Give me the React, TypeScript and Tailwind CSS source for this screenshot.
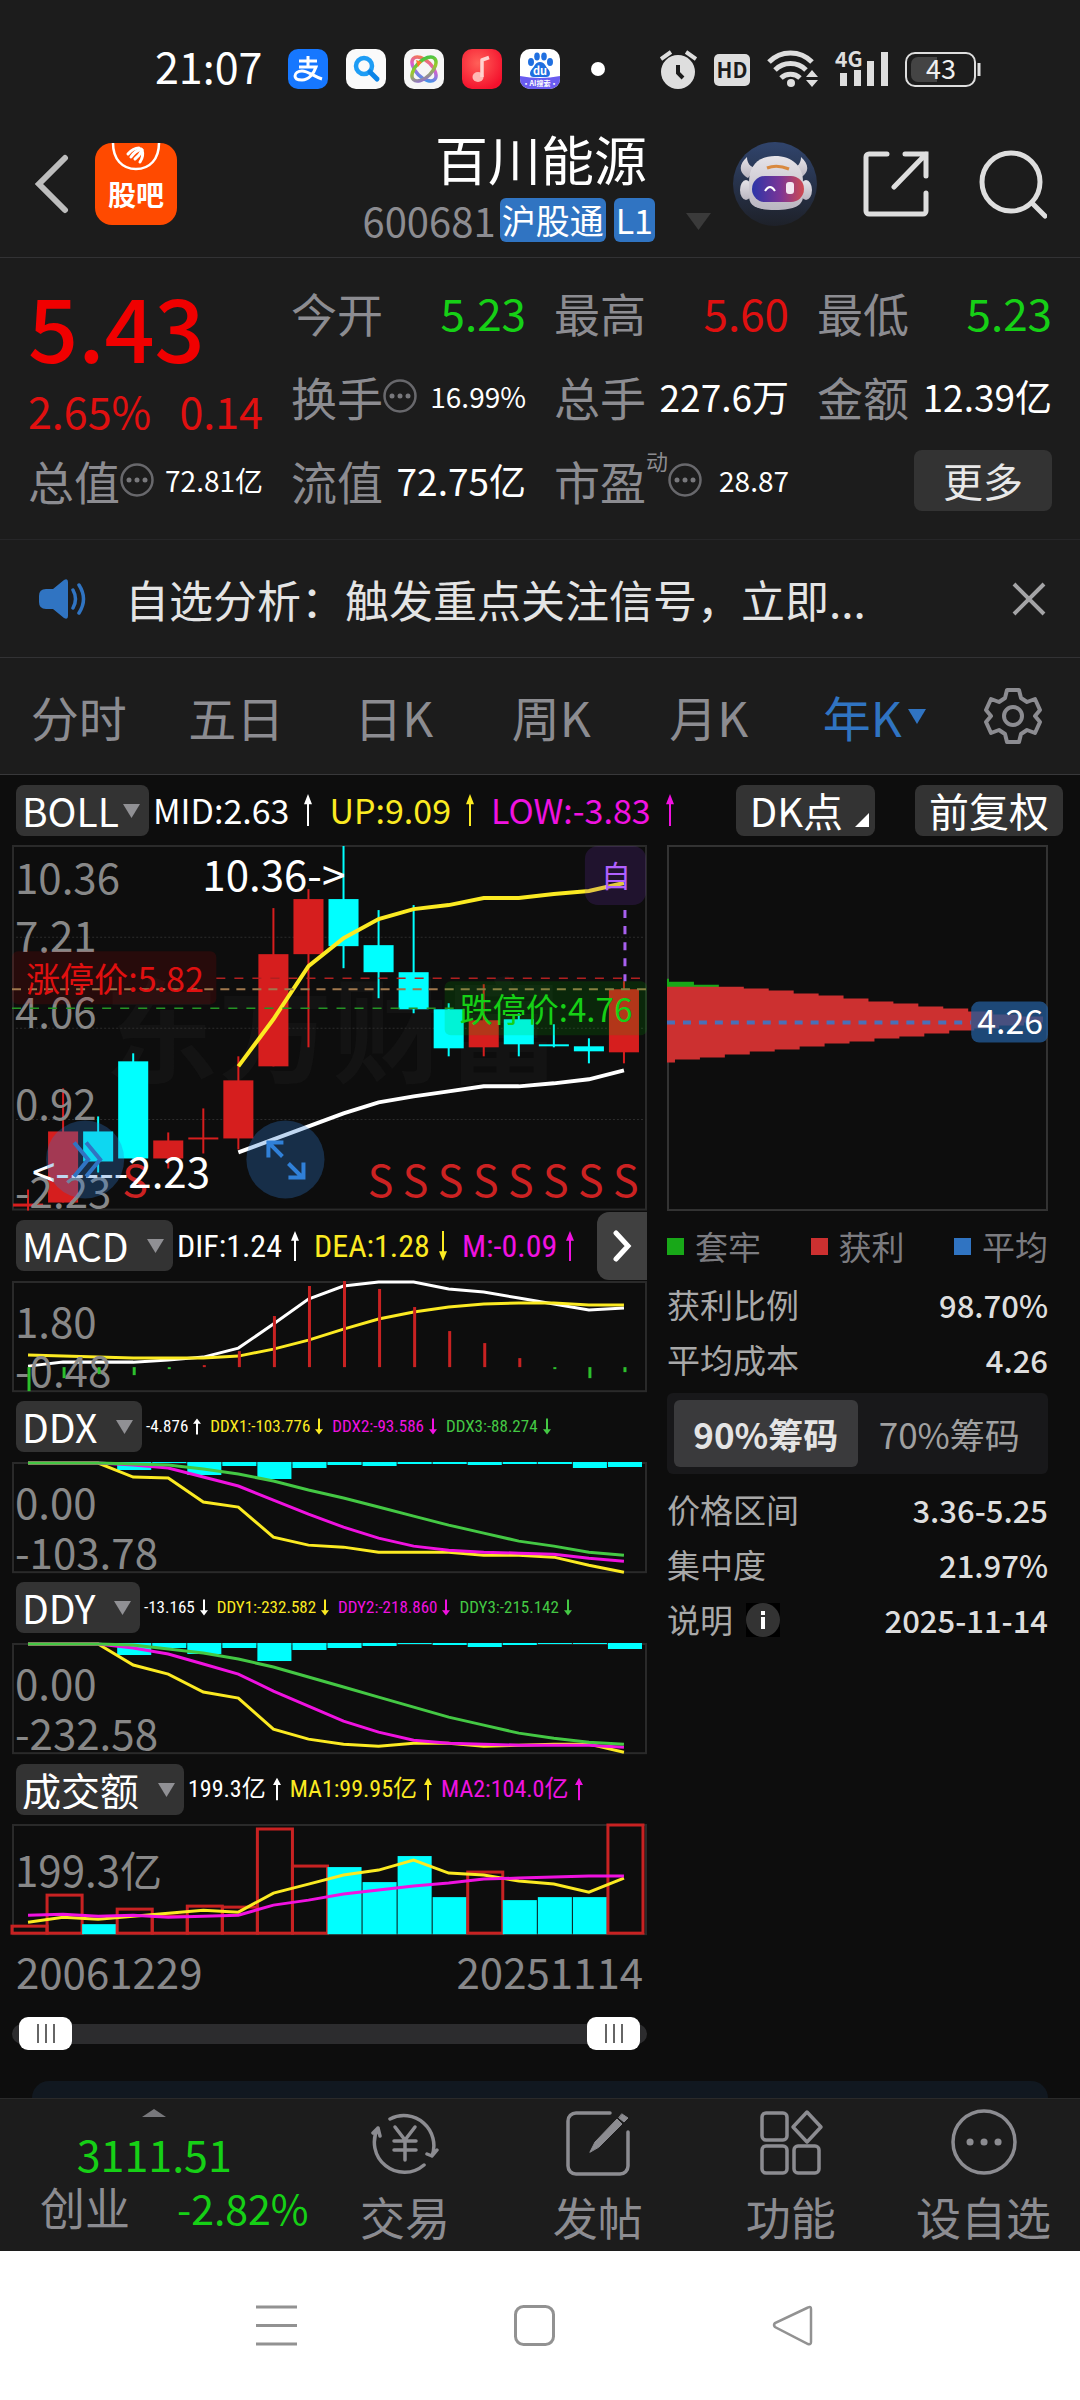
import { FC, ReactNode } from 'react'

/* ------------------------------------------------------------------ */
/* Data                                                               */
/* ------------------------------------------------------------------ */

type Tone = 'up' | 'down'

interface Candle {
  top: number
  bottom: number
  high: number
  low: number
  tone: Tone
}

const RED = '#d61e1e'
const CYAN = '#00ffff'
const YELLOW = '#fbea22'
const MAGENTA = '#f012e0'
const GREEN = '#44c844'
const CHART_WIDTH = 634
const STEP = 35

// x of the centre of the n-th yearly bar
const barX = (index: number) => 16 + STEP * index

const linePoints = (values: number[], start = 0) =>
  values.map((y, i) => `${barX(i + start)},${y}`).join(' ')

const candle = (top: number, bottom: number, high: number, low: number, tone: Tone): Candle => ({
  top,
  bottom,
  high,
  low,
  tone,
})

const CANDLES: Candle[] = [
  candle(358, 361, 344, 365, 'up'),
  candle(286, 357, 243, 357, 'up'),
  candle(286, 316, 271, 327, 'down'),
  candle(216, 313, 208, 313, 'down'),
  candle(295, 313, 287, 323, 'up'),
  candle(292, 294, 263, 308, 'up'),
  candle(235, 293, 211, 304, 'up'),
  candle(109, 221, 63, 221, 'up'),
  candle(54, 109, 44, 202, 'up'),
  candle(54, 101, 1, 123, 'down'),
  candle(100, 127, 65, 153, 'down'),
  candle(127, 164, 60, 168, 'down'),
  candle(164, 203, 158, 211, 'down'),
  candle(175, 202, 139, 211, 'up'),
  candle(174, 199, 168, 211, 'down'),
  candle(199, 201, 179, 202, 'down'),
  candle(201, 206, 193, 218, 'down'),
  candle(144, 207, 136, 218, 'up'),
]

const BOLL_UPPER = [221, 174, 121, 93, 74, 64, 60, 53, 53, 49, 46, 38]
const BOLL_LOWER = [307, 294, 281, 268, 257, 251, 246, 241, 241, 238, 234, 225]

const MACD_ZERO = 86
const MACD_BARS = [110, 97, 93, 94, 88, 84, 70, 35, 5, 0, 8, 26, 50, 62, 77, 88, 97, 91]
const MACD_DIF = [85, 81, 81, 81, 79, 76, 67, 43, 18, 5, 1, 1, 8, 11, 17, 23, 29, 27]
const MACD_DEA = [74, 75, 76, 77, 77, 77, 75, 68, 59, 48, 38, 31, 26, 23, 22, 22, 24, 24]

const DDX_BARS = [0, 0, 0, 8, 1, 13, 4, 17, 6, 3, 4, 2, 2, 3, 2, 2, 6, 5]
const DDX_LINES = [
  { color: YELLOW, values: [1, 1, 1, 15, 16, 40, 45, 75, 83, 85, 90, 90, 90, 93, 93, 95, 103, 110] },
  { color: MAGENTA, values: [1, 1, 1, 3, 6, 15, 24, 38, 52, 65, 76, 84, 88, 90, 91, 92, 96, 99] },
  { color: GREEN, values: [1, 1, 1, 2, 3, 7, 12, 19, 28, 36, 45, 54, 63, 71, 79, 84, 90, 93] },
]

const DDY_BARS = [0, 0, 0, 12, 5, 11, 5, 18, 7, 5, 3, 1, 2, 4, 2, 1, 1, 6]
const DDY_LINES = [
  { color: YELLOW, values: [1, 1, 1, 22, 31, 49, 55, 86, 96, 101, 103, 100, 100, 103, 102, 101, 101, 109] },
  { color: MAGENTA, values: [1, 1, 1, 5, 11, 21, 31, 48, 63, 78, 89, 97, 100, 101, 102, 102, 102, 104] },
  { color: GREEN, values: [1, 1, 1, 2, 6, 10, 16, 24, 34, 44, 54, 64, 74, 82, 90, 95, 99, 101] },
]

const VOLUME_BARS: { top: number; tone: Tone }[] = [
  { top: 102, tone: 'up' },
  { top: 71, tone: 'up' },
  { top: 100, tone: 'down' },
  { top: 85, tone: 'up' },
  { top: 92, tone: 'up' },
  { top: 82, tone: 'up' },
  { top: 83, tone: 'up' },
  { top: 5, tone: 'up' },
  { top: 42, tone: 'up' },
  { top: 43, tone: 'down' },
  { top: 58, tone: 'down' },
  { top: 32, tone: 'down' },
  { top: 73, tone: 'down' },
  { top: 48, tone: 'up' },
  { top: 76, tone: 'down' },
  { top: 73, tone: 'down' },
  { top: 73, tone: 'down' },
  { top: 1, tone: 'up' },
]
const VOLUME_MA1 = [98, 93, 95, 92, 89, 86, 88, 69, 60, 51, 46, 36, 49, 51, 57, 60, 68, 54]
const VOLUME_MA2 = [91, 90, 92, 91, 93, 92, 91, 81, 76, 70, 66, 62, 59, 55, 54, 53, 52, 52]

const TABS = ['分时', '五日', '日K', '周K', '月K']

/* ------------------------------------------------------------------ */
/* Status bar                                                         */
/* ------------------------------------------------------------------ */

const AppIcons: FC = () => (
  <div className="flex items-center gap-[18px]">
    <svg className="size-10" viewBox="0 0 40 40">
      <rect width="40" height="40" rx="10" fill="#1677ff" />
      <path
        d="M11 12h18M20 7v11M11 18h17c-2 6-7 13-14 13-4 0-7-1-7-4s3-5 7-5c6 0 11 5 20 8"
        fill="none"
        stroke="#fff"
        strokeWidth="3"
      />
    </svg>
    <svg className="size-10" viewBox="0 0 40 40">
      <rect width="40" height="40" rx="10" fill="#fafafa" />
      <circle cx="18" cy="17" r="8" fill="none" stroke="#1e9df5" strokeWidth="4.5" />
      <path d="M24 23l7 7" stroke="#0b84e8" strokeWidth="5" strokeLinecap="round" />
    </svg>
    <svg className="size-10" viewBox="0 0 40 40">
      <defs>
        <linearGradient id="orbit" x1="0" y1="0" x2="1" y2="1">
          <stop offset="0" stopColor="#fb7c2c" />
          <stop offset="0.45" stopColor="#d95fd0" />
          <stop offset="1" stopColor="#1f9ff0" />
        </linearGradient>
        <linearGradient id="orbit2" x1="1" y1="0" x2="0" y2="1">
          <stop offset="0" stopColor="#2dc04b" />
          <stop offset="0.5" stopColor="#9acc2a" />
          <stop offset="1" stopColor="#8f5cf0" />
        </linearGradient>
      </defs>
      <rect width="40" height="40" rx="10" fill="#f6f6f6" />
      <ellipse cx="20" cy="20" rx="15" ry="8" transform="rotate(45 20 20)" fill="none" stroke="url(#orbit)" strokeWidth="3.5" />
      <ellipse cx="20" cy="20" rx="15" ry="8" transform="rotate(-45 20 20)" fill="none" stroke="url(#orbit2)" strokeWidth="3.5" />
      <path d="M12 11l6 2-4 5z" fill="#fb7c2c" />
    </svg>
    <svg className="size-10" viewBox="0 0 40 40">
      <defs>
        <radialGradient id="music" cx="0.4" cy="0.35" r="0.7">
          <stop offset="0" stopColor="#ff6058" />
          <stop offset="1" stopColor="#f4102c" />
        </radialGradient>
      </defs>
      <rect width="40" height="40" rx="10" fill="url(#music)" />
      <ellipse cx="16" cy="28" rx="5.5" ry="5" fill="#ffb8b4" />
      <path d="M20 28V11l7-2.5" fill="none" stroke="#ffd2cf" strokeWidth="3.5" strokeLinejoin="round" />
    </svg>
    <svg className="size-10" viewBox="0 0 40 40">
      <defs>
        <clipPath id="baidu">
          <rect width="40" height="40" rx="10" />
        </clipPath>
      </defs>
      <g clipPath="url(#baidu)">
        <rect width="40" height="40" fill="#fff" />
        <path d="M0 27q20 4 40 0v13H0z" fill="#6a5cf0" />
        <g fill="#1f6fe0">
          <ellipse cx="11" cy="13" rx="3" ry="4" />
          <ellipse cx="17" cy="7.5" rx="2.8" ry="4" />
          <ellipse cx="24" cy="7.5" rx="2.8" ry="4" />
          <ellipse cx="30" cy="13" rx="3" ry="4" />
          <path d="M20 13c5 0 5 4 8 7s3 9-3 8H15c-6 1-6-5-3-8s3-7 8-7z" />
        </g>
        <text x="20" y="26" textAnchor="middle" fontSize="11" fontWeight="700" fill="#fff">
          du
        </text>
        <text x="20" y="37" textAnchor="middle" fontSize="7" fontWeight="700" fill="#fff">
          ·AI搜索·
        </text>
      </g>
    </svg>
  </div>
)

const StatusIcons: FC = () => (
  <div className="flex items-center gap-[17px]">
    <svg className="h-10 w-[37px]" viewBox="0 0 37 40">
      <circle cx="18" cy="23" r="17" fill="#dedede" />
      <path d="M18 16v8l5 5" fill="none" stroke="#1c1c1c" strokeWidth="4" />
      <path d="M1 10l10-7M26 3l10 7" stroke="#dedede" strokeWidth="4" />
    </svg>
    <svg className="h-10 w-9" viewBox="0 0 36 40">
      <rect y="5" width="36" height="32" rx="5" fill="#dedede" />
      <text x="18" y="29" textAnchor="middle" fontSize="21" fontWeight="700" fill="#1c1c1c">
        HD
      </text>
    </svg>
    <svg className="h-10 w-[51px]" viewBox="0 0 51 40">
      <g fill="none" stroke="#dedede" strokeWidth="5">
        <path d="M2 13a30 30 0 0 1 43 0" />
        <path d="M8 21a22 22 0 0 1 31 0" />
        <path d="M14 29a14 14 0 0 1 19 0" />
      </g>
      <circle cx="24" cy="34" r="4" fill="#dedede" />
      <path d="M39 28l6-7 6 7zM39 31l6 7 6-7z" fill="#dedede" />
    </svg>
    <svg className="h-10 w-[53px] overflow-visible" viewBox="0 0 53 40">
      <text x="0" y="18" fontSize="21" fontWeight="700" fill="#dedede">
        4G
      </text>
      <path d="M5 24h7v13H5zM19 21h7v16h-7zM32 12h7v25h-7zM46 3h7v34h-7z" fill="#dedede" />
    </svg>
    <svg className="h-10 w-[76px]" viewBox="0 0 76 40">
      <rect x="1" y="4" width="69" height="33" rx="9" fill="none" stroke="#dedede" strokeWidth="2" />
      <path d="M13 8h19v25H13a7 7 0 0 1-7-7V15a7 7 0 0 1 7-7z" fill="#444" />
      <path d="M74 14v13" stroke="#dedede" strokeWidth="3" />
      <text x="36" y="30" textAnchor="middle" fontSize="27" fill="#f0f0f0">
        43
      </text>
    </svg>
  </div>
)

const StatusBar: FC = () => (
  <div className="flex h-[122px] items-center pt-4 pr-[99px] pl-[155px]">
    <span className="pb-2 text-[43px] leading-none text-white">21:07</span>
    <div className="ml-[26px] flex items-center gap-[31px]">
      <AppIcons />
      <span className="size-[14px] rounded-full bg-white" />
    </div>
    <div className="ml-auto">
      <StatusIcons />
    </div>
  </div>
)

/* ------------------------------------------------------------------ */
/* Header                                                             */
/* ------------------------------------------------------------------ */

const GubaIcon: FC = () => (
  <svg className="size-[82px]" viewBox="0 0 82 82">
    <rect width="82" height="82" rx="17" fill="#ff4a00" />
    <path d="M18 0c0 16 9 26 23 26S64 16 64 0" fill="none" stroke="#fff" strokeWidth="2.5" />
    <g fill="none" stroke="#fff" strokeWidth="3" strokeLinecap="round">
      <path d="M33 11q5-6 11-6" />
      <path d="M36 14q4-6 10-8" />
      <path d="M40 16q5-4 7-9" />
      <path d="M45 19q4-6 2-12" />
    </g>
    <text x="41" y="63" textAnchor="middle" fontSize="28" fontWeight="700" fill="#fff">
      股吧
    </text>
  </svg>
)

const RobotIcon: FC = () => (
  <svg className="size-[84px]" viewBox="0 0 84 84">
    <defs>
      <linearGradient id="robotBg" x1="0" y1="0" x2="0" y2="1">
        <stop offset="0" stopColor="#30446c" />
        <stop offset="1" stopColor="#1e2129" />
      </linearGradient>
      <linearGradient id="visor" x1="0" y1="0" x2="1" y2="0">
        <stop offset="0" stopColor="#2b35a8" />
        <stop offset="0.55" stopColor="#7c3596" />
        <stop offset="1" stopColor="#d04a50" />
      </linearGradient>
      <linearGradient id="helmet" x1="0" y1="0" x2="0" y2="1">
        <stop offset="0" stopColor="#e6e3e8" />
        <stop offset="1" stopColor="#b9b5c0" />
      </linearGradient>
    </defs>
    <circle cx="42" cy="42" r="42" fill="url(#robotBg)" />
    <g fill="url(#helmet)">
      <path d="M14 15c-8 7-9 15 1 21l8-10c-6-1-9-5-9-11zM68 15c8 7 9 15-1 21l-8-10c6-1 9-5 9-11z" />
      <ellipse cx="13" cy="48" rx="6" ry="10" />
      <ellipse cx="73" cy="48" rx="6" ry="10" />
      <path d="M16 40c0-16 9-26 26-26s28 10 28 26v14c0 9-8 14-28 14s-26-5-26-14z" />
    </g>
    <path d="M34 26q10-4 22 1" stroke="#d9893f" strokeWidth="3" fill="none" />
    <rect x="19" y="34" width="52" height="26" rx="13" fill="url(#visor)" />
    <path d="M32 49q5-8 10 0" fill="none" stroke="#fff" strokeWidth="2" />
    <rect x="53" y="40" width="8" height="12" rx="3" fill="#f3e6f2" />
  </svg>
)

const Header: FC = () => (
  <header className="flex h-[136px] items-center border-b border-[#323234] pr-[33px] pb-3 pl-[34px]">
    <button aria-label="返回">
      <svg className="h-[60px] w-[35px]" viewBox="0 0 35 60">
        <path d="M31 4L5 30l26 26" fill="none" stroke="#bdbdbd" strokeWidth="6" strokeLinecap="round" />
      </svg>
    </button>
    <button aria-label="股吧" className="ml-[26px]">
      <GubaIcon />
    </button>
    <div className="ml-auto flex flex-col items-end pt-1">
      <h1 className="pr-2 text-[53px] leading-[56px] text-white">百川能源</h1>
      <div className="mt-3 flex items-center text-[34px] leading-[44px] text-white">
        <span className="mr-1 text-[40px] text-[#8c8c91]">600681</span>
        <span className="rounded-md bg-[#3074c2] px-[2px]">沪股通</span>
        <span className="ml-2 rounded-md bg-[#3074c2] px-[2px]">L1</span>
      </div>
    </div>
    <button aria-label="切换股票" className="mt-[76px] ml-[31px]">
      <svg className="h-[17px] w-[25px]" viewBox="0 0 25 17">
        <path d="M0 0h25L12.5 17z" fill="#3a3a3a" />
      </svg>
    </button>
    <div className="ml-[22px] flex items-center gap-[46px]">
      <button aria-label="智能助手">
        <RobotIcon />
      </button>
      <button aria-label="分享">
        <svg className="size-[66px]" viewBox="0 0 66 66">
          <g fill="none" stroke="#dedede" strokeWidth="5" strokeLinecap="round">
            <path d="M24 3H6a3 3 0 0 0-3 3v54a3 3 0 0 0 3 3h54a3 3 0 0 0 3-3V42" />
            <path d="M42 3h21v22M63 3L31 36" />
          </g>
        </svg>
      </button>
      <button aria-label="搜索">
        <svg className="size-[72px]" viewBox="0 0 72 72">
          <g fill="none" stroke="#dedede" strokeWidth="5" strokeLinecap="round">
            <circle cx="36" cy="34" r="29" />
            <path d="M57 55l13 13" />
          </g>
        </svg>
      </button>
    </div>
  </header>
)

/* ------------------------------------------------------------------ */
/* Quote                                                              */
/* ------------------------------------------------------------------ */

const MoreDots: FC = () => (
  <svg className="size-[34px] shrink-0" viewBox="0 0 34 34">
    <circle cx="17" cy="17" r="15.5" fill="none" stroke="#68686c" strokeWidth="2.5" />
    <g fill="#78787c">
      <circle cx="9" cy="17" r="2.5" />
      <circle cx="17" cy="17" r="2.5" />
      <circle cx="25" cy="17" r="2.5" />
    </g>
  </svg>
)

interface QuoteItemProps {
  label: string
  value: string
  valueClass: string
  note?: string
  hint?: boolean
}

const QuoteItem: FC<QuoteItemProps> = ({ label, value, valueClass, note, hint }) => (
  <div className="flex items-center whitespace-nowrap">
    <dt className="flex items-center text-[46px] text-[#8c8c91]">
      {label}
      {note && <sup className="-top-5 text-[22px]">{note}</sup>}
      {hint && <MoreDots />}
    </dt>
    <dd className={`ml-auto ${valueClass}`}>{value}</dd>
  </div>
)

const Quote: FC = () => (
  <section className="border-b border-[#262628] px-7 pt-3 pb-[17px]">
    <dl className="grid auto-rows-[84px] grid-cols-4 gap-x-7 leading-none">
      <div className="row-span-2 flex flex-col">
        <dd className="mt-[14px] text-[88px] leading-[82px] font-medium text-[#f00000]">5.43</dd>
        <dd className="mt-4 flex justify-between text-[43px] leading-[56px] text-[#e01010]">
          <span>2.65%</span>
          <span>0.14</span>
        </dd>
      </div>
      <QuoteItem label="今开" value="5.23" valueClass="text-[44px] text-[#16d016]" />
      <QuoteItem label="最高" value="5.60" valueClass="text-[44px] text-[#e01010]" />
      <QuoteItem label="最低" value="5.23" valueClass="text-[44px] text-[#16d016]" />
      <QuoteItem label="换手" value="16.99%" valueClass="text-[28px] text-white" hint />
      <QuoteItem label="总手" value="227.6万" valueClass="text-[37px] text-white" />
      <QuoteItem label="金额" value="12.39亿" valueClass="text-[37px] text-white" />
      <QuoteItem label="总值" value="72.81亿" valueClass="text-[28px] text-white" hint />
      <QuoteItem label="流值" value="72.75亿" valueClass="text-[37px] text-white" />
      <QuoteItem label="市盈" value="28.87" valueClass="text-[28px] text-white" note="动" hint />
      <div className="flex items-center justify-end">
        <button className="h-[61px] w-[138px] rounded-lg bg-[#333333] text-[40px] text-[#e8e8e8]">更多</button>
      </div>
    </dl>
  </section>
)

const Notice: FC = () => (
  <section className="flex h-[118px] items-center border-b border-[#323234] pr-[34px] pl-[38px]">
    <svg className="h-10 w-[50px]" viewBox="0 0 50 40">
      <path d="M8 10h7L26 1q4-2 4 2v34q0 4-4 2L15 30H8q-7 0-7-7v-6q0-7 7-7z" fill="#3074c2" />
      <path d="M35 11q5 9 0 18M41 6q9 14 0 28" fill="none" stroke="#3074c2" strokeWidth="3.5" strokeLinecap="round" />
    </svg>
    <a href="#analysis" className="ml-[37px] text-[44px] leading-none text-[#e4e4e4]">
      自选分析：触发重点关注信号，立即...
    </a>
    <button aria-label="关闭" className="ml-auto">
      <svg className="size-[34px]" viewBox="0 0 34 34">
        <path d="M2 2l30 30M32 2L2 32" stroke="#a4a4a6" strokeWidth="4" />
      </svg>
    </button>
  </section>
)

const PeriodTabs: FC = () => (
  <nav className="grid h-[117px] grid-cols-[7fr_7fr_7fr_7fr_7fr_7fr_6fr] items-center border-b border-[#38383a] text-[48px] leading-none text-[#8c8c91]">
    {TABS.map((tab) => (
      <button key={tab}>{tab}</button>
    ))}
    <button className="flex items-center justify-center gap-[6px] pl-4 text-[#3074c2]">
      年K
      <svg className="h-[15px] w-[18px]" viewBox="0 0 18 15">
        <path d="M0 0h18L9 15z" fill="#3074c2" />
      </svg>
    </button>
    <button aria-label="设置" className="flex justify-center">
      <svg className="size-[58px]" viewBox="0 0 58 58">
        <g fill="none" stroke="#8c8c91" strokeWidth="4" strokeLinejoin="round">
          <path d="M23 3h12l2 8 6 4 8-3 5 11-5 6 5 6-5 11-8-3-6 4-2 8H23l-2-8-6-4-8 3-5-11 5-6-5-6 5-11 8 3 6-4z" />
          <circle cx="29" cy="29" r="9" />
        </g>
      </svg>
    </button>
  </nav>
)

/* ------------------------------------------------------------------ */
/* Indicator headings                                                 */
/* ------------------------------------------------------------------ */

interface IndicatorSelectProps {
  name: string
  tight?: boolean
}

const IndicatorSelect: FC<IndicatorSelectProps> = ({ name, tight }) => (
  <div className="relative shrink-0">
    <select
      aria-label={name}
      className={`h-[51px] appearance-none rounded-lg bg-[#333333] pl-[6px] text-[39px] leading-none text-white ${
        tight ? 'pr-[30px]' : 'pr-[44px]'
      }`}
    >
      <option>{name}</option>
    </select>
    <svg
      className="pointer-events-none absolute top-[19px] right-[9px] h-[14px] w-[17px]"
      viewBox="0 0 17 14"
    >
      <path d="M0 0h17L8.5 14z" fill="#909094" />
    </svg>
  </div>
)

interface ReadingProps {
  text: string
  arrow: Tone
  className: string
}

/** One indicator reading with a thin trend arrow behind it. */
const Reading: FC<ReadingProps> = ({ text, arrow, className }) => (
  <span className={`flex shrink-0 items-center whitespace-nowrap ${className}`}>
    {text}
    <svg className="h-[1em] w-[10px]" viewBox="0 0 10 36" preserveAspectRatio="none">
      {arrow === 'up' ? (
        <path d="M5 1l4 11H6v23H4V12H1z" fill="currentColor" />
      ) : (
        <path d="M5 35l4-11H6V1H4v23H1z" fill="currentColor" />
      )}
    </svg>
  </span>
)

interface IndicatorRowProps {
  name: string
  className: string
  children: ReactNode
  next?: boolean
}

const IndicatorRow: FC<IndicatorRowProps> = ({ name, className, children, next }) => (
  <div className="flex h-[70px] items-center pl-1">
    <IndicatorSelect name={name} />
    <div
      className={`flex items-center pl-1 font-['Roboto_Condensed','Noto_Sans_CJK_SC',sans-serif] leading-none ${className}`}
    >
      {children}
    </div>
    {next && (
      <button
        aria-label="更多指标"
        className="ml-auto flex h-[68px] w-[50px] items-center justify-center rounded-l-xl bg-[#404040]"
      >
        <svg className="h-8 w-5" viewBox="0 0 20 32">
          <path d="M4 3l12 13L4 29" fill="none" stroke="#fff" strokeWidth="5" strokeLinecap="round" />
        </svg>
      </button>
    )}
  </div>
)

/* ------------------------------------------------------------------ */
/* Charts                                                             */
/* ------------------------------------------------------------------ */

interface FrameProps {
  height: number
  label: string
  children: ReactNode
}

const ChartFrame: FC<FrameProps> = ({ height, label, children }) => (
  <svg
    className="block w-full overflow-visible"
    viewBox={`0 0 ${CHART_WIDTH} ${height}`}
    role="img"
    aria-label={label}
  >
    <rect x="1" y="1" width={CHART_WIDTH - 2} height={height - 2} fill="none" stroke="#2a2a2a" strokeWidth="2" />
    {children}
  </svg>
)

const AxisLabel: FC<{ y: number; children: string }> = ({ y, children }) => (
  <text x="3" y={y} fontSize="42" fill="#888888">
    {children}
  </text>
)

const KLineChart: FC = () => (
  <ChartFrame height={365} label="年K线">
    <text x="92" y="229" fontSize="114" fontWeight="700" fill="#131313">
      东方财富
    </text>
    {[92, 183, 274].map((y) => (
      <path key={y} d={`M0 ${y}H634`} stroke="#2c2c2c" strokeDasharray="2 2" />
    ))}
    {CANDLES.map(({ top, bottom, high, low, tone }, i) => (
      <g key={i} fill={tone === 'up' ? RED : CYAN}>
        <rect x={barX(i) - 1} y={high} width="2" height={low - high} />
        <rect x={barX(i) - 15} y={top} width="30" height={bottom - top} />
      </g>
    ))}
    <AxisLabel y={49}>10.36</AxisLabel>
    <AxisLabel y={107}>7.21</AxisLabel>
    <AxisLabel y={183}>4.06</AxisLabel>
    <AxisLabel y={275}>0.92</AxisLabel>
    <AxisLabel y={362}>-2.23</AxisLabel>
    <polyline points={linePoints(BOLL_UPPER, 6)} fill="none" stroke={YELLOW} strokeWidth="4" />
    <polyline points={linePoints(BOLL_LOWER, 6)} fill="none" stroke="#fff" strokeWidth="4" />

    <rect y="106" width="204" height="53" rx="6" fill="#c80000" fillOpacity="0.14" />
    <path d="M204 133H634" stroke="#b02020" strokeWidth="1.5" strokeDasharray="9 9" />
    <path d="M0 144H634" stroke="#a0784e" strokeWidth="2" strokeDasharray="9 7" />
    <path d="M0 163H444" stroke="#259425" strokeWidth="1.5" strokeDasharray="9 9" />
    <text x="14" y="147" fontSize="34" fill="#e01010">
      涨停价:5.82
    </text>
    <rect x="432" y="136" width="202" height="54" rx="6" fill="#00b400" fillOpacity="0.16" />
    <text x="447" y="177" fontSize="33" fill="#16d016">
      跌停价:4.76
    </text>

    <rect x="572" y="1" width="61" height="59" rx="13" fill="#7830c8" fillOpacity="0.18" />
    <text x="603" y="42" textAnchor="middle" fontSize="30" fill="#b060ff">
      自
    </text>
    <path d="M612 65V136" stroke="#a860f0" strokeWidth="3" strokeDasharray="8 8" />

    {[3, 10, 11, 12, 13, 14, 15, 16, 17].map((i) => (
      <text key={i} x={barX(i) + 2} y="351" textAnchor="middle" fontSize="43" fontWeight="400" fill="#cc2222">
        S
      </text>
    ))}
    <text x="190" y="46" fontSize="42" fill="#fff">
      {'10.36->'}
    </text>
    <text x="20" y="342" fontSize="42" fill="#fff">
      {'<-----2.23'}
    </text>

    <circle cx="73" cy="314" r="39" fill="#2f7bd0" fillOpacity="0.3" />
    <path d="M62 297l14 17-14 17M74 297l14 17-14 17" fill="none" stroke="#3074c2" strokeWidth="4" />
    <circle cx="273" cy="314" r="39" fill="#2f7bd0" fillOpacity="0.3" />
    <path
      d="M271 297h-15v15M256 297l14 14M276 318l14 14M291 317v15h-15"
      fill="none"
      stroke="#3080d8"
      strokeWidth="4"
    />
  </ChartFrame>
)

const MacdChart: FC = () => (
  <ChartFrame height={111} label="MACD">
    <polyline points={linePoints(MACD_DIF)} fill="none" stroke="#fff" strokeWidth="3" />
    <polyline points={linePoints(MACD_DEA)} fill="none" stroke={YELLOW} strokeWidth="3" />
    <AxisLabel y={57}>1.80</AxisLabel>
    <AxisLabel y={106}>-0.48</AxisLabel>
    {MACD_BARS.map((y, i) => (
      <path key={i} d={`M${barX(i) + 1} ${MACD_ZERO}V${y}`} stroke={y > MACD_ZERO ? '#2cc02c' : '#c82222'} strokeWidth="3" />
    ))}
  </ChartFrame>
)

interface FlowChartProps {
  label: string
  bars: number[]
  lines: { color: string; values: number[] }[]
  low: string
}

const FlowChart: FC<FlowChartProps> = ({ label, bars, lines, low }) => (
  <ChartFrame height={111} label={label}>
    {bars.map((height, i) => (
      <rect key={i} x={barX(i) - 16} y="0" width="34" height={height} fill={CYAN} />
    ))}
    {lines.map(({ color, values }) => (
      <polyline key={color} points={linePoints(values)} fill="none" stroke={color} strokeWidth="3" />
    ))}
    <AxisLabel y={57}>0.00</AxisLabel>
    <AxisLabel y={107}>{low}</AxisLabel>
  </ChartFrame>
)

const VolumeChart: FC = () => (
  <ChartFrame height={111} label="成交额">
    <AxisLabel y={63}>199.3亿</AxisLabel>
    {VOLUME_BARS.map(({ top, tone }, i) =>
      tone === 'up' ? (
        <rect
          key={i}
          x={barX(i) - 16}
          y={top}
          width="35"
          height={109 - top}
          fill="none"
          stroke="#c82222"
          strokeWidth="3"
        />
      ) : (
        <rect key={i} x={barX(i) - 16} y={top} width="34" height={110 - top} fill={CYAN} />
      ),
    )}
    <polyline points={linePoints(VOLUME_MA1)} fill="none" stroke={YELLOW} strokeWidth="3" />
    <polyline points={linePoints(VOLUME_MA2)} fill="none" stroke={MAGENTA} strokeWidth="3" />
  </ChartFrame>
)

// Stepped outline of the chips in profit, narrowing towards the average cost.
const chipOutline = () => {
  const upper: string[] = []
  const lower: string[] = []
  for (let i = 0; i <= 12; i++) {
    const y = i === 0 ? 142 : Math.round(141 + i * 2.6)
    upper.push(`V${y}H${Math.min(382, 77 + i * 25)}`)
  }
  for (let i = 15; i >= 0; i--) {
    lower.push(`V${Math.round(218 - i * 2.65)}H${i === 0 ? 0 : Math.round(8 + (i - 1) * 25)}`)
  }
  return `M0 142${upper.join('')}${lower.join('')}Z`
}

const ChipChart: FC = () => (
  <svg className="block w-full" viewBox="0 0 382 367" role="img" aria-label="筹码分布">
    <rect x="1" y="1" width="380" height="365" fill="none" stroke="#333333" strokeWidth="2" />
    <path d="M0 134H2V137H27V140H52V144H0z" fill="#18a818" />
    <path d={chipOutline()} fill="#cc3030" />
    <path d="M0 178H305" stroke="#4a70b8" strokeWidth="4" strokeDasharray="8 8" />
    <rect x="305" y="157" width="77" height="41" rx="8" fill="#235a96" fillOpacity="0.78" />
    <text x="344" y="190" textAnchor="middle" fontSize="34" fill="#fff">
      4.26
    </text>
  </svg>
)

/* ------------------------------------------------------------------ */
/* Chip panel                                                         */
/* ------------------------------------------------------------------ */

const Legend: FC<{ swatch: string; children: string }> = ({ swatch, children }) => (
  <span className="flex items-center gap-[11px]">
    <i className={`size-[17px] ${swatch}`} />
    {children}
  </span>
)

const ChipRow: FC<{ label: ReactNode; value: string }> = ({ label, value }) => (
  <div className="flex h-[55px] items-center justify-between">
    <dt className="flex items-center text-[33px] text-[#a8a8a8]">{label}</dt>
    <dd className="text-[31px] font-medium text-[#dedede]">{value}</dd>
  </div>
)

const ChipPanel: FC = () => (
  <aside>
    <ChipChart />
    <div className="flex h-[66px] items-center justify-between pt-1 text-[33px] leading-none text-[#7c7c80]">
      <Legend swatch="bg-[#18a818]">套牢</Legend>
      <Legend swatch="bg-[#cc3030]">获利</Legend>
      <Legend swatch="bg-[#3074c2]">平均</Legend>
    </div>
    <dl className="leading-none">
      <ChipRow label="获利比例" value="98.70%" />
      <ChipRow label="平均成本" value="4.26" />
    </dl>
    <div className="mt-[6px] mb-2 flex h-[81px] rounded-md bg-[#18181a] p-[7px] text-[35px] leading-none">
      <button className="flex-1 rounded-md bg-[#3a3a3c] font-bold text-[#e4e4e4]">90%筹码</button>
      <button className="flex-1 text-[#a0a0a0]">70%筹码</button>
    </div>
    <dl className="leading-none">
      <ChipRow label="价格区间" value="3.36-5.25" />
      <ChipRow label="集中度" value="21.97%" />
      <ChipRow
        label={
          <>
            说明
            <button aria-label="筹码说明" className="ml-[13px]">
              <svg className="size-[34px]" viewBox="0 0 34 34">
                <rect width="34" height="34" fill="#000" />
                <circle cx="17" cy="17" r="17" fill="#333333" />
                <path d="M17 14v12M17 8v4" stroke="#fff" strokeWidth="4" />
              </svg>
            </button>
          </>
        }
        value="2025-11-14"
      />
    </dl>
  </aside>
)

/* ------------------------------------------------------------------ */
/* Range slider                                                       */
/* ------------------------------------------------------------------ */

const THUMB =
  "pointer-events-none absolute inset-x-[7px] top-0 h-[33px] w-[calc(100%-14px)] appearance-none bg-transparent [&::-webkit-slider-thumb]:pointer-events-auto [&::-webkit-slider-thumb]:h-[33px] [&::-webkit-slider-thumb]:w-[53px] [&::-webkit-slider-thumb]:appearance-none [&::-webkit-slider-thumb]:rounded-[9px] [&::-webkit-slider-thumb]:bg-white [&::-webkit-slider-thumb]:bg-[linear-gradient(90deg,#666_2px,#fff_2px,#fff_8px,#666_8px,#666_10px,#fff_10px,#fff_16px,#666_16px)] [&::-webkit-slider-thumb]:bg-[length:18px_19px] [&::-webkit-slider-thumb]:bg-center [&::-webkit-slider-thumb]:bg-no-repeat"

const DateRange: FC = () => (
  <div>
    <div className="flex justify-between px-1 pt-[14px] text-[42px] leading-[44px] text-[#88888a]">
      <span>20061229</span>
      <span>20251114</span>
    </div>
    <div className="relative mt-6 flex h-[33px] items-center">
      <div className="h-5 w-full rounded-full bg-[#2c2c2e]" />
      <input type="range" aria-label="开始日期" className={THUMB} defaultValue={0} />
      <input type="range" aria-label="结束日期" className={THUMB} defaultValue={100} />
    </div>
  </div>
)

/* ------------------------------------------------------------------ */
/* Bottom bars                                                        */
/* ------------------------------------------------------------------ */

const Action: FC<{ label: string; children: ReactNode }> = ({ label, children }) => (
  <button className="flex flex-col items-center gap-[18px] pt-[9px]">
    <svg className="size-[68px]" viewBox="0 0 68 68">
      <g fill="none" stroke="#8c8c91" strokeWidth="3.5" strokeLinecap="round" strokeLinejoin="round">
        {children}
      </g>
    </svg>
    <span>{label}</span>
  </button>
)

const BottomBar: FC = () => (
  <footer className="grid h-[153px] grid-cols-[8fr_5fr_5fr_5fr_5fr] border-t border-[#2a2a2a] bg-[#1c1c1c] text-[45px] leading-none text-[#8c8c91]">
    <button className="flex flex-col items-center pt-[10px]">
      <svg className="h-2 w-6" viewBox="0 0 24 8">
        <path d="M12 0l12 8H0z" fill="#78787c" />
      </svg>
      <span className="mt-3 text-[43px] leading-[48px] text-[#16d016]">3111.51</span>
      <span className="mt-1 flex w-full items-center justify-between pl-[40px] leading-[52px]">
        创业
        <span className="text-[41px] text-[#16d016]">-2.82%</span>
      </span>
    </button>
    <Action label="交易">
      <path d="M19 11A30 30 0 0 1 61 48l-5-2M61 48l5-6M53 57A30 30 0 0 1 7 20l-5 5M7 20l2 8" />
      <path d="M24 19l10 13 10-13M34 32v20M23 33h22M23 42h22" />
    </Action>
    <Action label="发帖">
      <path d="M46 5H12a8 8 0 0 0-8 8v45a8 8 0 0 0 8 8h44a8 8 0 0 0 8-8V24" />
      <path d="M26 44l5-10 22-23 5 5-23 23zM58 6l6 4-4 4-5-4z" fill="#8c8c91" strokeWidth="1" />
    </Action>
    <Action label="功能">
      <rect x="5" y="5" width="25" height="27" rx="4" />
      <rect x="5" y="38" width="25" height="27" rx="4" />
      <rect x="37" y="38" width="25" height="27" rx="4" />
      <path d="M50 4l14 15-14 15-14-15z" />
    </Action>
    <Action label="设自选">
      <circle cx="34" cy="34" r="31" />
      <path d="M20 34h.1M34 34h.1M48 34h.1" strokeWidth="7" />
    </Action>
  </footer>
)

const SystemNav: FC = () => (
  <nav className="flex h-[149px] items-center justify-center gap-[217px] bg-white pr-3">
    <button aria-label="最近任务">
      <svg className="size-[41px]" viewBox="0 0 41 41">
        <path d="M0 2h41M0 20.5h41M0 39h41" stroke="#929292" strokeWidth="3" />
      </svg>
    </button>
    <button aria-label="主屏幕">
      <svg className="size-[41px]" viewBox="0 0 41 41">
        <rect x="1.5" y="1.5" width="38" height="38" rx="8" fill="none" stroke="#929292" strokeWidth="3" />
      </svg>
    </button>
    <button aria-label="返回">
      <svg className="size-[41px]" viewBox="0 0 41 41">
        <path d="M36 2.5L3 18q-2 2 0 4l33 17q3 1 3-2V4q0-3-3-1.5z" fill="none" stroke="#929292" strokeWidth="2.5" />
      </svg>
    </button>
  </nav>
)

export default function App() {
  return (
    <div className="flex min-h-screen flex-col bg-[#0d0d0d] font-['Noto_Sans_CJK_SC',sans-serif]">
      <div className="bg-[#1c1c1c]">
        <StatusBar />
        <Header />
        <Quote />
        <Notice />
        <PeriodTabs />
      </div>

      <div className="flex h-[70px] items-center pr-[17px] pl-4 leading-none">
        <IndicatorSelect name="BOLL" tight />
        <div className="flex items-center gap-4 pl-1 text-[34px]">
          <Reading text="MID:2.63" arrow="up" className="gap-[14px] text-white" />
          <Reading text="UP:9.09" arrow="up" className="gap-[14px] text-[#fbea22]" />
          <Reading text="LOW:-3.83" arrow="up" className="gap-[14px] text-[#f012e0]" />
        </div>
        <div className="ml-auto flex gap-10 text-[40px] text-white">
          <button className="flex h-[51px] items-center gap-3 rounded-lg bg-[#333333] pr-[6px] pl-[14px]">
            DK点
            <svg className="mt-5 size-[14px]" viewBox="0 0 14 14">
              <path d="M14 0v14H0z" fill="#fff" />
            </svg>
          </button>
          <button className="h-[51px] rounded-lg bg-[#333333] px-[14px]">前复权</button>
        </div>
      </div>

      <main className="grid grid-cols-[5fr_3fr] gap-5 pr-8 pl-3">
        <section>
          <KLineChart />
          <IndicatorRow name="MACD" className="gap-[14px] text-[32px]" next>
            <Reading text="DIF:1.24" arrow="up" className="gap-2 text-white" />
            <Reading text="DEA:1.28" arrow="down" className="gap-2 text-[#fbea22]" />
            <Reading text="M:-0.09" arrow="up" className="gap-2 text-[#f012e0]" />
          </IndicatorRow>
          <MacdChart />
          <IndicatorRow name="DDX" className="gap-2 text-[17px]">
            <Reading text="-4.876" arrow="up" className="gap-1 text-white" />
            <Reading text="DDX1:-103.776" arrow="down" className="gap-1 text-[#fbea22]" />
            <Reading text="DDX2:-93.586" arrow="down" className="gap-1 text-[#f012e0]" />
            <Reading text="DDX3:-88.274" arrow="down" className="gap-1 text-[#44c844]" />
          </IndicatorRow>
          <FlowChart label="DDX" bars={DDX_BARS} lines={DDX_LINES} low="-103.78" />
          <IndicatorRow name="DDY" className="gap-2 text-[17px]">
            <Reading text="-13.165" arrow="down" className="gap-1 text-white" />
            <Reading text="DDY1:-232.582" arrow="down" className="gap-1 text-[#fbea22]" />
            <Reading text="DDY2:-218.860" arrow="down" className="gap-1 text-[#f012e0]" />
            <Reading text="DDY3:-215.142" arrow="down" className="gap-1 text-[#44c844]" />
          </IndicatorRow>
          <FlowChart label="DDY" bars={DDY_BARS} lines={DDY_LINES} low="-232.58" />
          <IndicatorRow name="成交额" className="gap-2 text-[24px]">
            <Reading text="199.3亿" arrow="up" className="gap-[6px] text-white" />
            <Reading text="MA1:99.95亿" arrow="up" className="gap-[6px] text-[#fbea22]" />
            <Reading text="MA2:104.0亿" arrow="up" className="gap-[6px] text-[#f012e0]" />
          </IndicatorRow>
          <VolumeChart />
          <DateRange />
        </section>
        <ChipPanel />
      </main>

      <div className="mt-auto px-8">
        <div className="h-[17px] rounded-t-[36px] bg-[#111820]" />
      </div>
      <BottomBar />
      <SystemNav />
    </div>
  )
}
